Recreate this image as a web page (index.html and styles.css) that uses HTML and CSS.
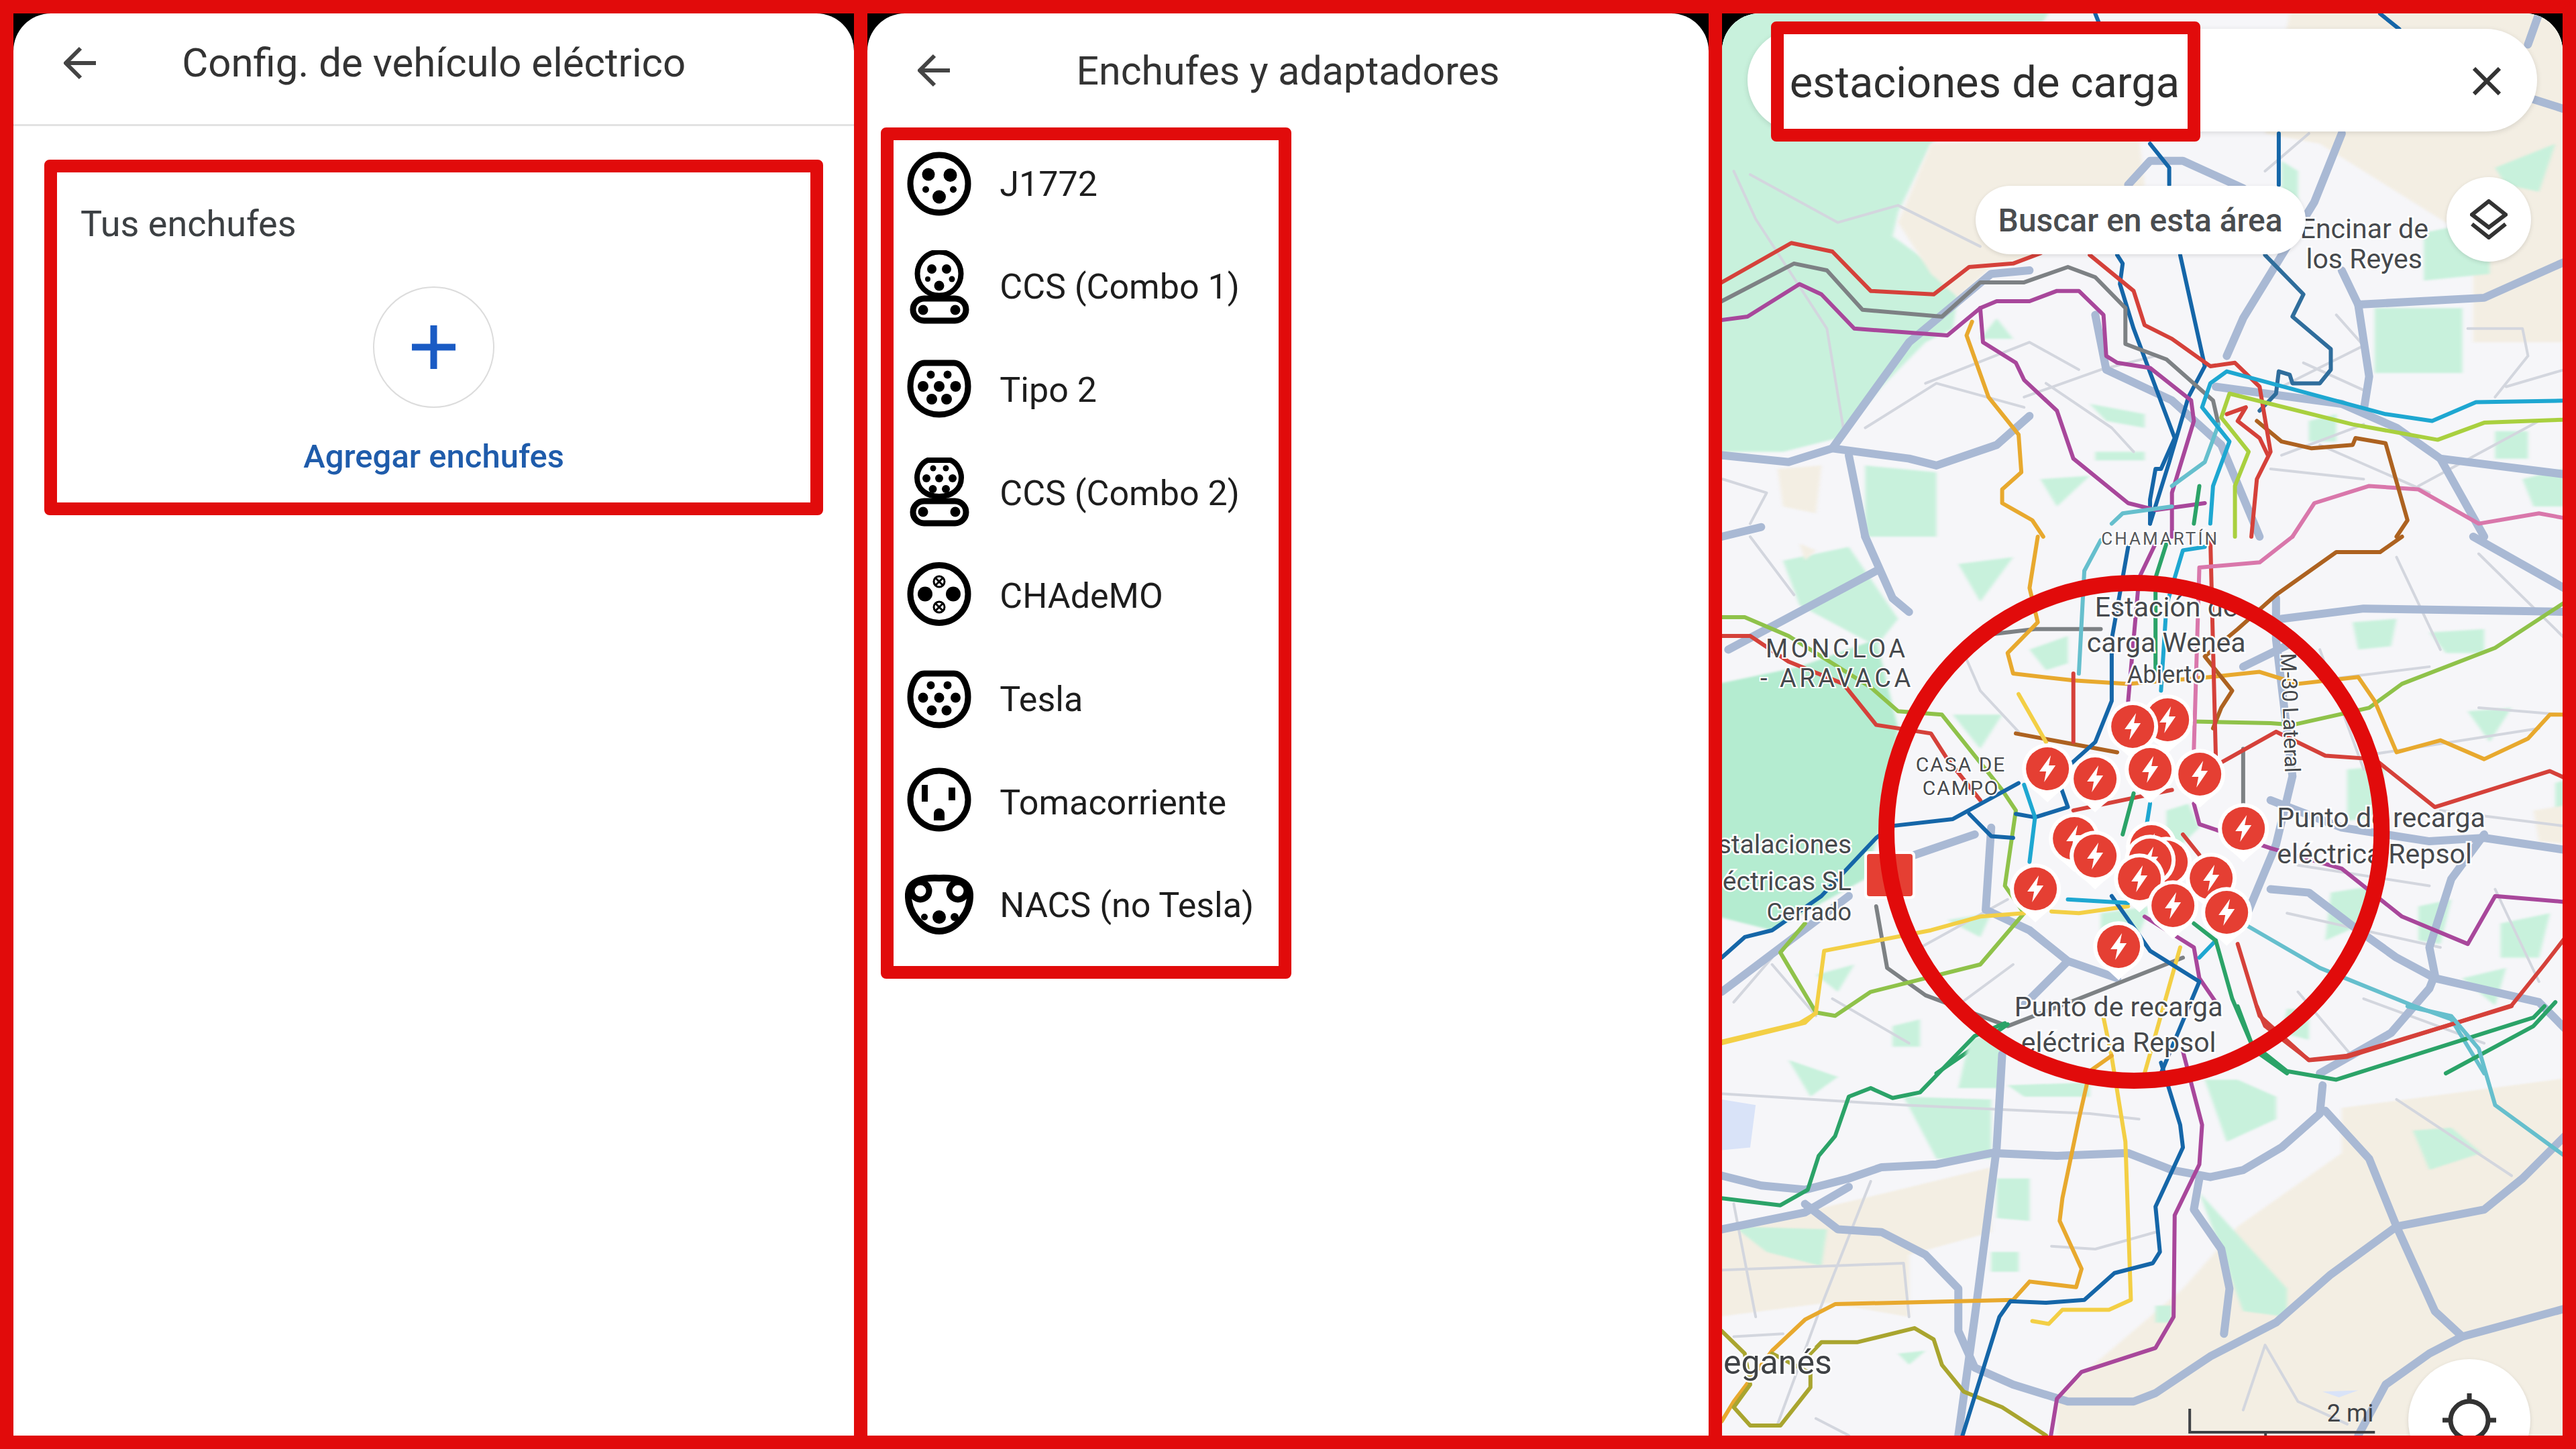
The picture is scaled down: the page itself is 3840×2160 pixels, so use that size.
FILE: index.html
```html
<!DOCTYPE html>
<html lang="es">
  <head>
    <meta charset="UTF-8" />
    <title>Enchufes y estaciones de carga</title>
    <link rel="stylesheet" href="styles.css">
  </head>
  <body>
    <main class="frame">

      <!-- panel 1: config -->
      <section class="phone">
        <div class="screen">
          <header class="topbar topbar-line">
            <svg class="back" viewBox="0 0 50 50"><path d="M48 25H4M25 3L3 25l22 22"/></svg>
            <h1>Config. de vehículo eléctrico</h1>
          </header>
          <div class="mark plugs-box">
            <h2>Tus enchufes</h2>
            <div class="add-circle">
              <svg viewBox="0 0 65 65"><path d="M32.5 0v65M0 32.5h65"/></svg>
            </div>
            <p class="add-label">Agregar enchufes</p>
          </div>
        </div>
      </section>

      <!-- panel 2: lista de enchufes -->
      <section class="phone">
        <div class="screen">
          <header class="topbar">
            <svg class="back" viewBox="0 0 50 50"><path d="M48 25H4M25 3L3 25l22 22"/></svg>
            <h1>Enchufes y adaptadores</h1>
          </header>
          <ul class="mark plug-list">
            <li>
              <svg class="plug" viewBox="0 0 110 110">
                <circle class="ring" cx="55" cy="55" r="43"/>
                <circle cx="39" cy="41" r="9.5"/><circle cx="71.5" cy="42" r="10"/>
                <circle cx="35" cy="63.5" r="5"/><circle cx="76" cy="63.5" r="5"/>
                <circle cx="55" cy="74.5" r="10"/>
              </svg>
              <span>J1772</span>
            </li>
            <li>
              <svg class="plug" viewBox="0 0 110 110">
                <circle class="ring ring-thin" cx="55" cy="35" r="32.5"/>
                <circle cx="44" cy="28" r="7"/><circle cx="66" cy="28" r="7"/>
                <circle cx="38" cy="43" r="4"/><circle cx="74" cy="43" r="4.5"/>
                <circle cx="55" cy="53" r="7.5"/>
                <rect class="ring ring-fill" x="16" y="72" width="79" height="33" rx="16.5"/>
                <circle cx="31" cy="89" r="7.5"/><circle cx="79" cy="89" r="7.5"/>
              </svg>
              <span>CCS (Combo 1)</span>
            </li>
            <li>
              <svg class="plug" viewBox="0 0 110 110">
                <path class="ring" d="M33 15H77C90 15 98 35 98 50C98 76 78 92 55 92C32 92 12 76 12 50C12 35 20 15 33 15Z"/>
                <circle cx="42.5" cy="32.5" r="6"/><circle cx="67.5" cy="32.5" r="6"/>
                <circle cx="31" cy="50" r="8"/><circle cx="55" cy="50" r="8"/><circle cx="79.5" cy="50" r="8"/>
                <circle cx="44" cy="69" r="8"/><circle cx="66" cy="69" r="8"/>
              </svg>
              <span>Tipo 2</span>
            </li>
            <li>
              <svg class="plug" viewBox="0 0 110 110">
                <path class="ring ring-thin" d="M38 6H72C82 10 88 22 88 32C88 50 73 60 55 60C37 60 22 50 22 32C22 22 28 10 38 6Z"/>
                <circle cx="46" cy="18" r="4.5"/><circle cx="65" cy="18" r="4.5"/>
                <circle cx="36" cy="33" r="6"/><circle cx="55" cy="33" r="6"/><circle cx="75" cy="33" r="6"/>
                <circle cx="45.5" cy="49" r="6"/><circle cx="65" cy="49" r="6"/>
                <rect class="ring ring-fill" x="16" y="67" width="79" height="33" rx="16.5"/>
                <circle cx="31" cy="83" r="7.5"/><circle cx="79" cy="83" r="7.5"/>
              </svg>
              <span>CCS (Combo 2)</span>
            </li>
            <li>
              <svg class="plug" viewBox="0 0 110 110">
                <circle class="ring" cx="55" cy="51.5" r="43"/>
                <circle cx="34" cy="51.5" r="11"/><circle cx="76" cy="51.5" r="11"/>
                <g class="socket-x">
                  <circle cx="55" cy="33" r="8"/><path d="M50 28l10 10M60 28L50 38"/>
                  <circle cx="55" cy="71" r="8"/><path d="M50 66l10 10M60 66L50 76"/>
                </g>
              </svg>
              <span>CHAdeMO</span>
            </li>
            <li>
              <svg class="plug" viewBox="0 0 110 110">
                <path class="ring" d="M33 17H77C90 17 98 36 98 52C98 78 78 94 55 94C32 94 12 78 12 52C12 36 20 17 33 17Z"/>
                <circle cx="42.5" cy="34.5" r="6"/><circle cx="67.5" cy="34.5" r="6"/>
                <circle cx="31" cy="53" r="7.5"/><circle cx="55" cy="53" r="7.5"/><circle cx="79.5" cy="53" r="7.5"/>
                <circle cx="44" cy="72" r="7.5"/><circle cx="66" cy="72" r="7.5"/>
              </svg>
              <span>Tesla</span>
            </li>
            <li>
              <svg class="plug" viewBox="0 0 110 110">
                <circle class="ring" cx="55" cy="51" r="43"/>
                <rect x="29" y="29" width="9" height="25"/>
                <rect x="69" y="33" width="10" height="19"/>
                <path d="M47 82V72a8 8 0 0 1 16 0V82Z"/>
              </svg>
              <span>Tomacorriente</span>
            </li>
            <li>
              <svg class="plug" viewBox="0 0 110 110">
                <path class="ring ring-heavy" d="M55 14C75 13 100 16 101 38C102 65 80 93 55 93C30 93 8 65 9 38C10 16 35 13 55 14Z"/>
                <circle class="ring ring-fill" cx="27" cy="33" r="13"/>
                <circle class="ring ring-fill" cx="83" cy="33" r="13"/>
                <circle cx="33" cy="72" r="5"/><circle cx="55" cy="72" r="10"/><circle cx="78" cy="72" r="6"/>
              </svg>
              <span>NACS (no Tesla)</span>
            </li>
          </ul>
        </div>
      </section>

      <!-- panel 3: mapa -->
      <section class="phone">
        <div class="screen map-screen">
          <svg class="map" viewBox="2567 20 1253 2120" preserveAspectRatio="none">
            <defs>
              <g id="pin">
                <path class="pin-edge" d="M-27 27A38 38 0 1 1 27 27Q12 38 0 50Q-12 38 -27 27Z"/>
                <circle class="pin-red" r="32"/>
                <path class="pin-bolt" d="M5-20L-12 4H-2L-5 20L12-5H2Z"/>
              </g>
            </defs>
            <rect class="land" x="2560" y="0" width="1280" height="2160"/>

            <!-- upper part -->
            <g transform="translate(2560 0) scale(.8163 .5102)">
              <path class="green" d="M0 0H620L500 300 390 420 330 620 320 690 380 760 440 850 430 960 380 1000 300 1130 220 1280 120 1320H0Z"/>
              <path class="tan" d="M390 420L770 400 780 540 640 720 500 780 440 870 390 800 330 650Z"/>
              <path class="tan" d="M1050 0H1568V1000H1380V700L1100 420 1000 390Z"/>
              <path class="green" d="M1200 900H1360V1090H1200ZM1290 680L1410 640V800L1290 820ZM1420 490L1530 420 1500 560 1440 540ZM480 990L510 930 540 990ZM680 1180L780 1210V1250L710 1230ZM690 1320H780V1345H690ZM590 1400L680 1390 620 1480ZM270 1360L400 1380V1568H270ZM1080 1230L1130 1210V1290H1080ZM1420 1260H1480V1340H1420ZM1470 1400L1568 1360V1480H1490ZM1030 470L1060 500V620L1030 640Z"/>
              <path class="tan" d="M110 1370L190 1360 180 1500 120 1480Z"/>
              <path class="minor" d="M30 500L70 640 200 960 230 1250M60 510L220 650 330 600 480 720M1000 500L1080 390M1030 1130L1180 1010 1130 920M1370 960H1470L1480 1040 1420 1160M380 1120L570 1000 660 1080M560 1160L700 1080 800 1040M1280 1420L1500 1230M1070 1060L1180 1140M270 1250L400 1120 560 1190M600 1120L720 1250 760 1320M1030 1330L1180 1240M1100 1300L1300 1440M1440 1130L1568 1070M1010 1370L1180 1400M10 1400L90 1440 60 1530"/>
              <path class="road" d="M8 1330L130 1350 210 1310 350 1340 400 1360 510 1300 570 1215"/>
              <path class="road" d="M210 1310L350 1000 500 800 570 790"/>
              <path class="road" d="M750 540L790 470H850L960 550"/>
              <path class="road" d="M1140 390L1090 590 960 930 930 1040"/>
              <path class="road" d="M1568 750L1400 870 1170 890 1140 790"/>
              <path class="road" d="M1170 890L1190 1100 1180 1200"/>
              <path class="road" d="M690 920L710 1080 830 1170 920 1300 990 1568"/>
              <path class="road" d="M910 1130L1140 1180 1240 1250 1320 1340 1568 1390"/>
              <path class="road" d="M1320 1340L1400 1568M240 1330L270 1568M8 1568L80 1540M1500 40L1480 130M1490 290L1568 330"/>
              <path class="line gold" d="M465 940L455 980 495 1160 550 1270 555 1380 520 1430V1470L575 1520 595 1568"/>
              <path class="line pink" d="M1050 1568L1090 1470 1190 1420 1280 1430 1390 1530 1500 1500 1568 1520"/>
              <path class="line brown" d="M985 1230L1030 1290 1085 1310 1160 1300 1165 1280 1220 1295 1260 1520 1240 1568"/>
              <path class="line blue" d="M730 745L740 770 735 830 760 960 835 1280 810 1370H800L790 1460V1530"/>
              <path class="line blue" d="M845 745L890 1070 860 1160 825 1350 790 1530"/>
              <path class="line blue" d="M690 40L700 80M1210 40L1245 85M790 420L825 490V540M1025 390V540"/>
              <path class="line steel" d="M1000 745L1070 860 1050 925 1120 1020V1080L1100 1120H1050L1045 1095 1025 1085 1020 1150 990 1200"/>
              <path class="line purple" d="M8 935L55 925 150 830 190 860 250 960 420 980 480 900 510 880H570L620 850H660L705 920 710 1040 730 1060 790 1075 865 1170 870 1230 830 1440V1568"/>
              <path class="line purple" d="M480 900L485 1000 545 1060 560 1110 620 1200 650 1340 750 1470 800 1490 890 1470"/>
              <path class="line gray" d="M8 880L140 770 200 790 265 905 410 925 480 825H560L640 780 690 810 745 900V1005L820 1050 905 1170 915 1240"/>
              <path class="line red" d="M8 825L135 710 210 735 280 850 395 860 460 780 540 770 590 740"/>
              <path class="line red" d="M680 745L760 850 780 950 830 990 900 1070 945 1060 990 1130 1010 1320 985 1400 975 1568M930 1210L965 1190 950 1230 990 1280 1005 1330"/>
              <path class="line teal" d="M720 1530L740 1500 830 1480M830 1420L890 1350 915 1240"/>
              <path class="line green-line" d="M870 1530L880 1420"/>
              <path class="line cyan" d="M1568 1170L1385 1175 1305 1230 1220 1210 930 1085 900 1120 885 1190 935 1290 905 1420 900 1530"/>
              <path class="line lime" d="M1568 1225L1400 1235 1315 1285 1160 1240 935 1150 920 1220 970 1320 945 1420V1568"/>
            </g>

            <!-- middle part -->
            <g transform="translate(2560 800) scale(.8163 .5102)">
              <path class="green-deep" d="M0 430L150 380 290 300 330 560 310 780 270 1000 100 1150 0 1110Z"/>
              <path class="green" d="M120 70L240 30 330 240 290 320 150 200ZM440 80L540 60 480 190ZM1300 280L1400 270 1400 340 1330 340ZM570 330L640 290V370L600 390ZM430 520L520 520 480 620ZM1150 680L1220 670 1200 820 1150 830ZM1370 510L1450 500 1410 600ZM1120 1040L1200 1020 1180 1130 1110 1180ZM1430 1130L1520 1100 1500 1230 1430 1230ZM1040 1380H1080V1470L1030 1450ZM320 1430L370 1410V1490H320ZM700 1100L790 1080 770 1160 700 1150ZM860 780L880 850 820 940 820 800ZM1280 1080L1340 1060 1320 1190 1280 1180ZM1360 1290L1440 1260 1420 1370ZM420 1120L500 1100 480 1170ZM180 1280L250 1250 220 1330ZM1160 250L1240 240 1230 320 1170 330ZM1530 720L1568 700V830L1530 820Z"/>
              <path class="tan" d="M150 20L180 40 160 70ZM1490 800L1568 780V900L1500 890Z"/>
              <path class="minor" d="M450 340L480 450 550 570M1040 1100L1320 1200M1180 640L1500 560M1320 800L1568 850M60 0L140 170M100 1250L180 1400M30 1360L100 1230M1390 50L1568 330M1100 420L1300 380M1060 960L1300 1020M1100 330L1180 680M1240 60L1320 330M1390 500L1540 520M360 1210L530 1060M210 1350L350 1480M430 1380L540 1250M1060 1330L1160 1520M1180 1350L1400 1480M1420 1030L1500 1300"/>
              <path class="road" d="M270 0L320 180 350 220M290 100L20 330M1020 180V300L1050 700 1020 900 960 1130"/>
              <path class="road" d="M1030 240L1180 210 1568 220M960 380L1050 310M1010 770L1140 850 1300 890 1400 880 1568 920M1380 0L1568 170"/>
              <path class="road" d="M1400 870L1340 1000 1300 1200 1310 1280 1300 1320 1230 1450 1100 1568"/>
              <path class="road" d="M1010 1030L1080 1040 1170 1150 1240 1230 1310 1290 1500 1360 1568 1470"/>
              <path class="road" d="M500 850L490 1090 570 1150 640 1240 730 1290M640 1240L560 1368M360 930L470 870M8 1330L240 1050"/>
              <path class="line gray" d="M500 285L580 270H700M290 1080L310 1260 380 1340 530 1430 660 1350 850 1230M960 620V800"/>
              <path class="line lime-dark" d="M8 235H50L130 290 280 440 330 510 410 520 470 640 520 740 545 800 525 1020 560 1100 480 1250 280 1330 215 1400 180 1390 115 1215 160 1130"/>
              <path class="line lime-dark" d="M870 540L1010 545 1050 550 1190 500 1250 430 1420 325 1568 170"/>
              <path class="line gold" d="M585 0L570 150 585 250 530 340 540 400 650 420 750 430 900 410 990 395 1060 430 1170 410 1200 480 1240 630 1320 595 1400 650 1480 590 1520 520H1568"/>
              <path class="line brown" d="M1250 0L1210 45H1130L1020 170 950 270 890 350 940 450 920 500 905 560M545 575L730 630"/>
              <path class="line yellow" d="M8 1480L160 1420 180 1390 195 1210 390 1150 480 1110 560 1100M550 460L600 600M610 1095L660 1100 750 1080M845 1200L780 1568"/>
              <path class="line red" d="M8 290H60L130 365 230 430 290 550 390 575 420 650 480 770M920 660L1020 570 1110 640 1200 650 1310 790 1520 685 1568 720M650 800L830 740M850 870L880 930M950 1190L990 1400 1080 1530 1150 1520 1450 1370 1510 1250 1568 1130M650 400V600M900 0L910 640"/>
              <path class="line purple" d="M870 780L880 840 1010 910 1140 970 1250 1110 1370 1190 1420 1050 1568 1070M800 20L770 120 750 480M780 1110L870 1200 880 1290 910 1360"/>
              <path class="line blue" d="M8 1230L50 1170 100 1150 190 1050 290 880 320 845 430 825 550 720M460 810L500 875 540 880M545 810L580 820 640 790 620 700 690 600 720 480V300L750 30M720 1050L790 1210 880 1300 810 1568"/>
              <path class="line cyan" d="M890 30L850 40 820 200 810 450M560 725L580 820 570 950M640 1060L750 1070M790 780L780 880M880 1230L910 1180"/>
              <path class="line teal" d="M700 10L670 100 660 400M960 1130L1100 1260 1270 1370 1340 1410 1400 1568"/>
              <path class="line green-line" d="M820 20L800 120 800 400M760 750L740 870M870 1130L910 1180 940 1350 980 1500 1040 1568M530 1425L400 1568M1330 1568L1490 1430 1530 1360"/>
              <path class="line pink" d="M1050 0L990 75 880 90 870 620"/>
            </g>

            <!-- lower part -->
            <g transform="translate(2560 1500) scale(.8163 .4209)">
              <path class="tan" d="M950 780L1140 520V360L1568 250V1568H620V1380L850 1000Z"/>
              <path class="tan" d="M310 660L500 570V800L350 880V1100L200 1050 0 1100V800Z"/>
              <path class="green" d="M340 320L500 330V540L400 540ZM130 190L220 250 170 320ZM460 120L520 90V290H440ZM530 280L680 270V320H560ZM890 260L950 260 1020 320V400L930 480ZM1270 440L1340 430 1395 520 1300 580ZM30 780L200 790 190 920 90 870ZM510 610H570V760L510 750ZM500 870H550V940H500ZM880 660L1040 1000V1100L960 1080ZM800 1060H830V1120H800ZM330 1230L380 1220 350 1270Z"/>
              <path class="water" d="M8 330L70 350 60 500 8 510ZM1105 1365L1170 1360 1135 1385Z"/>
              <path class="minor" d="M10 310L340 350 680 380 770 400M30 700L70 1100M0 935L340 910 350 1100M280 620L190 1060 110 1480M1240 330L1450 600M960 1430L1000 1200 1060 1400 1150 1480M610 850L690 860 800 800M30 1170L120 1160M180 1460L240 1520"/>
              <path class="road" d="M8 600L80 635 160 650 240 610 300 570 400 560 500 520 620 530 750 520 830 580 900 605 960 580 1030 500 1100 380 1105 280"/>
              <path class="road" d="M520 170L510 500 490 800 470 1100 440 1520"/>
              <path class="road" d="M1110 370L1190 540 1240 780 1310 1080 1360 1170"/>
              <path class="road" d="M1568 420L1470 610 1400 720 1240 780 1120 950 1020 1120 900 1240 800 1370 760 1400H640L540 1340 470 1280 440 1150V1000L380 880 300 800 220 790 160 700"/>
              <path class="road" d="M8 790L160 730 240 640M880 610L870 720 920 860 935 1000 925 1160"/>
              <path class="road" d="M1568 1060L1360 1170 1300 1230 1220 1340 1170 1520"/>
              <path class="line yellow" d="M705 40L720 180 745 480 755 1040 715 1075H630L605 1125 575 1115"/>
              <path class="line gold" d="M720 175L680 230 660 400 630 680 625 760 665 930 655 995 570 975 540 1040 215 1055 160 1110 100 1220 30 1400 8 1470"/>
              <path class="line yellow" d="M8 125L150 60 180 25"/>
              <path class="line green-line" d="M8 680L115 705 165 650 185 530 215 460 240 320 280 290 320 325 370 305 470 105 525 60"/>
              <path class="line olive" d="M170 1230L190 1190H255L360 1140 395 1180 410 1270 450 1365 520 1420 600 1520M8 1150L50 1230 60 1340 30 1420 60 1485H115L170 1350V1300L100 1230"/>
              <path class="line purple" d="M850 160L885 420 880 560 835 740 833 1100 800 1210 665 1295 620 1390 605 1568"/>
              <path class="line blue" d="M810 200L845 420 850 500 800 710 808 870 795 910 725 945 670 1040 600 1050 535 1045 515 1100 440 1568"/>
              <path class="line red" d="M985 0L1000 70 1080 190 1150 175 1450 0"/>
              <path class="line green-line" d="M950 0L975 130 1040 230 1130 260 1490 40 1510 0"/>
              <path class="line teal" d="M1260 0L1340 35 1390 150 1420 350 1568 560"/>
            </g>

            <!-- map labels -->
            <text class="lbl" x="3524" y="355" text-anchor="middle">Encinar de</text>
            <text class="lbl" x="3524" y="400" text-anchor="middle">los Reyes</text>
            <text class="area" x="3220" y="812" text-anchor="middle">CHAMARTÍN</text>
            <text class="lbl" x="3229" y="919" text-anchor="middle">Estación de</text>
            <text class="lbl" x="3229" y="972" text-anchor="middle">carga Wenea</text>
            <text class="lbl lbl-small" x="3229" y="1018" text-anchor="middle">Abierto</text>
            <text class="area area-big" x="2632" y="980">MONCLOA</text>
            <text class="area area-big" x="2624" y="1024">- ARAVACA</text>
            <text class="area area-mid" x="2923" y="1150" text-anchor="middle">CASA DE</text>
            <text class="area area-mid" x="2923" y="1185" text-anchor="middle">CAMPO</text>
            <text class="road-name" transform="translate(3403 1063) rotate(88)" text-anchor="middle">M-30 Lateral</text>
            <text class="lbl" x="3394" y="1233">Punto de recarga</text>
            <text class="lbl" x="3394" y="1287">eléctrica Repsol</text>
            <text class="lbl lbl-edge" x="2760" y="1272" text-anchor="end">stalaciones</text>
            <text class="lbl lbl-edge" x="2760" y="1327" text-anchor="end">éctricas SL</text>
            <text class="lbl lbl-small" x="2760" y="1372" text-anchor="end">Cerrado</text>
            <text class="lbl" x="3158" y="1515" text-anchor="middle">Punto de recarga</text>
            <text class="lbl" x="3158" y="1568" text-anchor="middle">eléctrica Repsol</text>
            <text class="city" x="2569" y="2048">eganés</text>

            <!-- scale -->
            <text class="scale-txt" x="3538" y="2119" text-anchor="end">2 mi</text>
            <path class="scale" d="M3264 2100V2135H3540M3377 2135V2140"/>

            <!-- chargers -->
            <rect class="store-edge" x="2779" y="1269" width="76" height="71" rx="6"/>
            <rect class="pin-red" x="2783" y="1273" width="68" height="63" rx="4"/>
            <use href="#pin" x="3231" y="1073"/>
            <use href="#pin" x="3179" y="1083"/>
            <use href="#pin" x="3052" y="1146"/>
            <use href="#pin" x="3123" y="1161"/>
            <use href="#pin" x="3205" y="1147"/>
            <use href="#pin" x="3279" y="1154"/>
            <use href="#pin" x="3344" y="1235"/>
            <use href="#pin" x="3092" y="1250"/>
            <use href="#pin" x="3207" y="1262"/>
            <use href="#pin" x="3229" y="1285"/>
            <use href="#pin" x="3123" y="1276"/>
            <use href="#pin" x="3205" y="1282"/>
            <use href="#pin" x="3189" y="1310"/>
            <use href="#pin" x="3296" y="1309"/>
            <use href="#pin" x="3239" y="1350"/>
            <use href="#pin" x="3319" y="1360"/>
            <use href="#pin" x="3034" y="1325"/>
            <use href="#pin" x="3158" y="1411"/>

            <ellipse class="big-ring" cx="3181" cy="1240" rx="369" ry="371"/>
          </svg>

          <div class="search-pill">
            <svg class="close" viewBox="0 0 42 42"><path d="M2 2l38 38M40 2L2 40"/></svg>
          </div>
          <div class="mark search-box">estaciones de carga</div>
          <div class="area-pill">Buscar en esta área</div>
          <div class="round-btn layers-btn">
            <svg viewBox="0 0 56 60"><path d="M28 3L53 23 28 42 3 23ZM3 37L28 57 53 37"/></svg>
          </div>
          <div class="round-btn locate-btn">
            <svg viewBox="0 0 84 84"><circle cx="42" cy="42" r="28"/><path d="M42 2V14M42 70V82M2 42H14M70 42H82"/></svg>
          </div>
        </div>
      </section>
    </main>
  </body>
</html>
```

FILE: styles.css
```css
html,
body {
  margin: 0;
  padding: 0;
  background: #e10b0b;
}

body {
  font-family: "Roboto", "Liberation Sans", sans-serif;
  color: #333;
}

.frame {
  width: 3840px;
  height: 2160px;
  box-sizing: border-box;
  padding: 20px;
  display: flex;
  gap: 20px;
  overflow: hidden;
}

.phone {
  flex: 1;
  background: #000;
}

.screen {
  height: 100%;
  background: #fff;
  border-radius: 56px 56px 0 0;
  overflow: hidden;
  position: relative;
}

.mark {
  border: 19px solid #e10b0b;
  border-radius: 8px;
  box-sizing: border-box;
}

/* top bar */
.topbar {
  height: 170px;
  box-sizing: border-box;
  display: grid;
  grid-template-columns: 200px 1fr 200px;
  align-items: center;
  justify-items: center;
}

.topbar-line {
  height: 168px;
  padding-bottom: 18px;
  border-bottom: 3px solid #e2e2e2;
}

.topbar h1 {
  grid-column: 2;
  margin: 0;
  font-size: 59px;
  font-weight: 400;
  color: #333;
  white-space: nowrap;
}

.topbar-line h1 {
  font-size: 60px;
}

.back {
  grid-column: 1;
  grid-row: 1;
  width: 50px;
  height: 50px;
}

.back path {
  fill: none;
  stroke: #444;
  stroke-width: 6;
}

/* panel 1 */
.plugs-box {
  margin: 50px 46px 0;
  height: 530px;
  padding: 47px 35px 0;
  display: flex;
  flex-direction: column;
}

.plugs-box h2 {
  margin: 0;
  font-size: 54px;
  line-height: 60px;
  font-weight: 400;
  color: #3c4043;
}

.add-circle {
  width: 181px;
  height: 181px;
  box-sizing: border-box;
  margin: 63px auto 0;
  border: 2px solid #dcdcdc;
  border-radius: 50%;
  display: flex;
  align-items: center;
  justify-content: center;
}

.add-circle svg {
  width: 65px;
  height: 65px;
}

.add-circle path {
  fill: none;
  stroke: #1a5bc4;
  stroke-width: 10;
}

.add-label {
  margin: 43px 0 0;
  text-align: center;
  font-size: 49px;
  line-height: 60px;
  font-weight: 500;
  color: #1f5cab;
}

/* panel 2 */
.plug-list {
  list-style: none;
  margin: 0 0 0 20px;
  width: 612px;
  padding: 0 0 25px 13px;
  display: flex;
  flex-direction: column;
  gap: 23.7px;
}

.plug-list li {
  height: 130px;
  display: flex;
  align-items: center;
  gap: 35px;
  font-size: 52px;
  color: #1d1d1d;
  white-space: nowrap;
}

.plug {
  width: 110px;
  height: 110px;
  flex: none;
  fill: #000;
}

.ring {
  fill: none;
  stroke: #000;
  stroke-width: 9;
}

.ring-thin {
  stroke-width: 8;
}

.ring-heavy {
  stroke-width: 10;
}

.ring-fill {
  fill: #fff;
}

.socket-x circle,
.socket-x path {
  fill: none;
  stroke: #000;
  stroke-width: 3;
}

/* panel 3 */
.map {
  display: block;
  width: 100%;
  height: 100%;
}

.land { fill: #f6f6f9; }
.green { fill: #c8f1dc; filter: blur(3px); }
.green-deep { fill: #b4ecd0; filter: blur(3px); }
.tan { fill: #f3eee3; filter: blur(3px); }
.water { fill: #d9e3f8; }

.road,
.minor,
.line {
  fill: none;
  stroke-linejoin: round;
  stroke-linecap: round;
  vector-effect: non-scaling-stroke;
}

.road {
  stroke: #a9b9d4;
  stroke-width: 12px;
}

.minor {
  stroke: #d3d6de;
  stroke-width: 4px;
}

.line { stroke-width: 6px; }
.red { stroke: #d5413a; }
.gray { stroke: #7d8184; }
.purple { stroke: #a8479b; }
.gold { stroke: #e8a92e; }
.yellow { stroke: #f3cf45; }
.blue { stroke: #1566a8; }
.steel { stroke: #2f6d9c; }
.cyan { stroke: #1ea7d1; }
.teal { stroke: #66bfcd; }
.lime { stroke: #a9d03f; }
.lime-dark { stroke: #8fc24a; }
.brown { stroke: #ad6220; }
.pink { stroke: #d977ab; }
.green-line { stroke: #2ba368; }
.olive { stroke: #a9a52f; }

.lbl {
  font-size: 41px;
  fill: #46494d;
  stroke: #fff;
  stroke-width: 5px;
  paint-order: stroke;
}

.lbl-small { font-size: 36px; }

.lbl-edge { font-size: 39px; }

.area {
  font-size: 26px;
  letter-spacing: 3px;
  fill: #55585c;
  stroke: #fff;
  stroke-width: 4px;
  paint-order: stroke;
}

.area-big {
  font-size: 38px;
  letter-spacing: 4.5px;
  fill: #46494d;
}

.area-mid {
  font-size: 30px;
  letter-spacing: 2px;
  fill: #46494d;
}

.road-name {
  font-size: 32px;
  fill: #46494d;
  stroke: #fff;
  stroke-width: 4px;
  paint-order: stroke;
}

.city {
  font-size: 50px;
  fill: #3f4246;
  stroke: #fff;
  stroke-width: 5px;
  paint-order: stroke;
}

.scale-txt {
  font-size: 36px;
  fill: #3f4246;
}

.scale {
  fill: none;
  stroke: #3f4246;
  stroke-width: 4px;
}

.pin-edge,
.store-edge { fill: #fff; }
.pin-red { fill: #e53f33; }
.pin-bolt { fill: #fff; }

.big-ring {
  fill: none;
  stroke: #e10b0b;
  stroke-width: 24px;
}

/* things over the map */
.search-pill {
  position: absolute;
  left: 38px;
  top: 23px;
  width: 1177px;
  height: 153px;
  background: #fff;
  border-radius: 76px;
  box-shadow: 0 2px 8px rgba(0, 0, 0, 0.12);
}

.close {
  position: absolute;
  left: 1081px;
  top: 57px;
  width: 42px;
  height: 42px;
}

.close path {
  fill: none;
  stroke: #333;
  stroke-width: 6;
}

.search-box {
  position: absolute;
  left: 73px;
  top: 12px;
  width: 640px;
  height: 179px;
  padding: 2px 0 0 9px;
  background: #fff;
  display: flex;
  align-items: center;
  font-size: 65px;
  color: #2f2f2f;
  white-space: nowrap;
}

.area-pill {
  position: absolute;
  left: 378px;
  top: 257px;
  width: 492px;
  height: 102px;
  background: #fff;
  border-radius: 51px;
  box-shadow: 0 2px 6px rgba(0, 0, 0, 0.12);
  display: flex;
  align-items: center;
  justify-content: center;
  font-size: 48px;
  font-weight: 500;
  color: #4a4d50;
  white-space: nowrap;
}

.round-btn {
  position: absolute;
  background: #fff;
  border-radius: 50%;
  box-shadow: 0 2px 6px rgba(0, 0, 0, 0.12);
  display: flex;
  align-items: center;
  justify-content: center;
}

.round-btn svg {
  fill: none;
  stroke: #333;
  stroke-width: 6;
}

.layers-btn {
  left: 1080px;
  top: 244px;
  width: 126px;
  height: 126px;
}

.layers-btn svg {
  width: 56px;
  height: 60px;
}

.locate-btn {
  left: 1023px;
  top: 2006px;
  width: 182px;
  height: 182px;
}

.locate-btn svg {
  width: 84px;
  height: 84px;
  stroke-width: 7;
}
```
